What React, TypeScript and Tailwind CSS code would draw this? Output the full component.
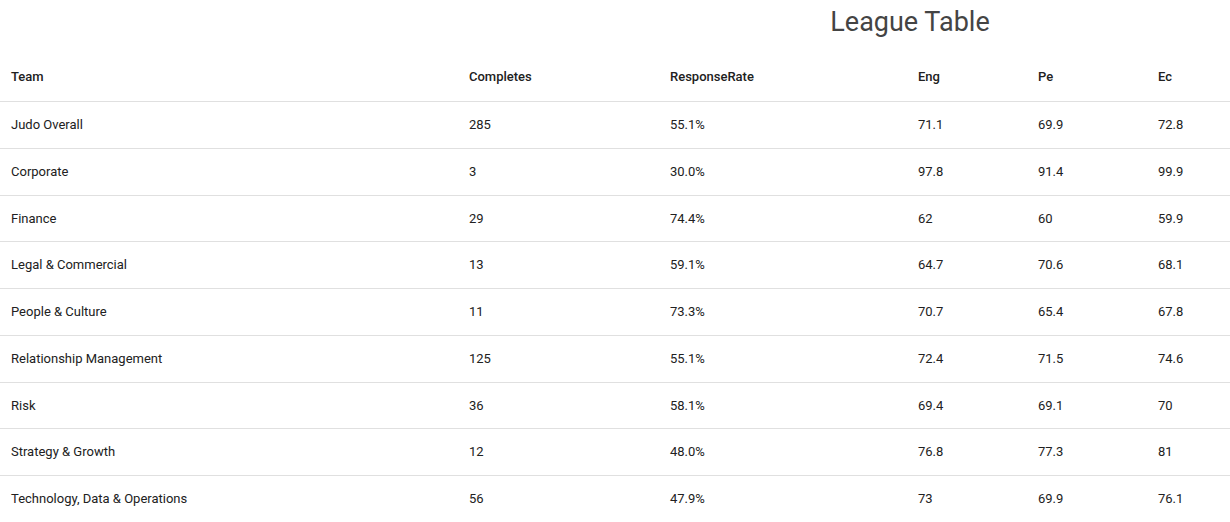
const rows = [
  ['Judo Overall', '285', '55.1%', '71.1', '69.9', '72.8'],
  ['Corporate', '3', '30.0%', '97.8', '91.4', '99.9'],
  ['Finance', '29', '74.4%', '62', '60', '59.9'],
  ['Legal & Commercial', '13', '59.1%', '64.7', '70.6', '68.1'],
  ['People & Culture', '11', '73.3%', '70.7', '65.4', '67.8'],
  ['Relationship Management', '125', '55.1%', '72.4', '71.5', '74.6'],
  ['Risk', '36', '58.1%', '69.4', '69.1', '70'],
  ['Strategy & Growth', '12', '48.0%', '76.8', '77.3', '81'],
  ['Technology, Data & Operations', '56', '47.9%', '73', '69.9', '76.1'],
];

const headers = ['Team', 'Completes', 'ResponseRate', 'Eng', 'Pe', 'Ec'];
const cols = 'grid grid-cols-[458px_201px_248px_120px_120px_1fr]';

export default function App() {
  return (
    <div className="w-[1230px] h-[522px] overflow-hidden bg-white font-['Roboto',sans-serif] text-[#212121]">
      <h1 className="pl-[590px] pt-[4px] h-[51px] text-center text-[27px] leading-[36px] text-[#444444]">League Table</h1>

      <div className={`${cols} h-[51px] pt-[2px] items-center border-b border-[#e0e0e0] text-[13px] font-medium`}>
        {headers.map((h) => (
          <div key={h} className="pl-[11px]">{h}</div>
        ))}
      </div>

      {rows.map((r) => (
        <div key={r[0]} className={`${cols} h-[46.75px] items-center border-b border-[#e0e0e0] text-[13px]`}>
          {r.map((c, i) => (
            <div key={i} className="pl-[11px]">{c}</div>
          ))}
        </div>
      ))}
    </div>
  );
}
